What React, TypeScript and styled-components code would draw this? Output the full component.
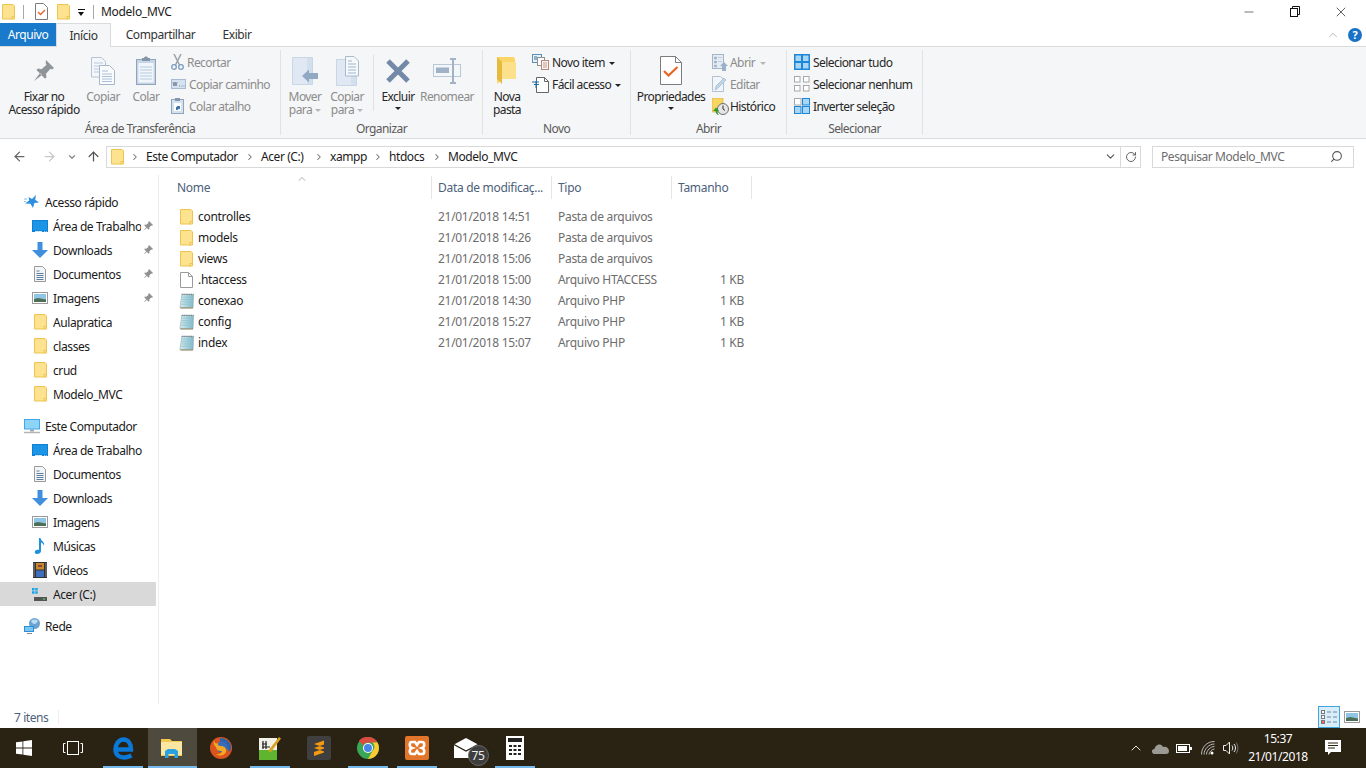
import React from 'react';
import styled, { createGlobalStyle } from 'styled-components';
import { ArrowLeft, ArrowRight, ArrowUp, ChevronDown, ChevronRight, ChevronUp, RotateCw, Search, X, Minus } from 'lucide-react';

const Global = createGlobalStyle`
  html, body { margin: 0; padding: 0; background: #fff; overflow: hidden; }
  * { box-sizing: border-box; }
`;

const Page = styled.div`
  width: 1366px;
  height: 768px;
  display: flex;
  flex-direction: column;
  font-family: "Noto Sans", "Open Sans", sans-serif;
  font-size: 12px;
  letter-spacing: -0.42px;
  color: #1a1a1a;
  background: #fff;
`;

/* ---- title bar ---- */
const TitleBar = styled.div`
  height: 23px;
  display: flex;
  align-items: center;
  padding-left: 2px;
`;
const TitleSep = styled.span`
  width: 1px;
  height: 14px;
  background: #a8a8a8;
  margin: 0 ${p => p.$r}px 0 ${p => p.$l}px;
`;
const QuickGap = styled.span`
  width: 9px;
`;
const TitleText = styled.span`
  color: #1a1a1a;
  letter-spacing: -0.3px;
`;
const WindowControls = styled.div`
  margin-left: auto;
  display: flex;
  padding-right: 2px;
`;
const WindowButton = styled.div`
  width: 46px;
  height: 22px;
  display: flex;
  align-items: center;
  justify-content: center;
`;
const QuickCaret = styled.span`
  width: 7px;
  height: 6px;
  margin-left: 8px;
  border-top: 1px solid #111;
  position: relative;
  &::after {
    content: "";
    position: absolute;
    left: 0;
    top: 2px;
    border: 3.5px solid transparent;
    border-top: 4px solid #111;
    border-bottom: 0;
  }
`;

/* ---- tabs ---- */
const TabRow = styled.div`
  height: 24px;
  display: flex;
  align-items: flex-end;
  border-bottom: 1px solid #dadbdc;
`;
const FileTab = styled.div`
  width: 56px;
  height: 23px;
  background: #1979ca;
  color: #fff;
  display: flex;
  align-items: center;
  justify-content: center;
`;
const Tab = styled.div`
  width: ${p => p.$w}px;
  height: 24px;
  margin-bottom: ${p => (p.$active ? '-1px' : '0')};
  background: ${p => (p.$active ? '#f5f6f7' : 'transparent')};
  border: 1px solid ${p => (p.$active ? '#dadbdc' : 'transparent')};
  border-bottom: 0;
  display: flex;
  align-items: center;
  justify-content: center;
  color: #333;
`;
const RibbonHelp = styled.div`
  margin-left: auto;
  display: flex;
  align-items: center;
  gap: 8px;
  height: 23px;
  padding-right: 4px;
`;
const HelpBadge = styled.span`
  width: 14px;
  height: 14px;
  border-radius: 50%;
  background: #1a72c4;
  color: #fff;
  font-size: 11px;
  font-weight: 700;
  line-height: 14px;
  text-align: center;
  letter-spacing: 0;
`;

/* ---- ribbon ---- */
const Ribbon = styled.div`
  height: 92px;
  display: flex;
  background: #f5f6f7;
  border-bottom: 1px solid #dadbdc;
  letter-spacing: -0.57px;
`;
const Group = styled.div`
  width: ${p => p.$w}px;
  display: flex;
  flex-direction: column;
  position: relative;
  &::after {
    content: "";
    position: absolute;
    right: 0;
    top: 3px;
    bottom: 3px;
    width: 1px;
    background: #e1e2e3;
  }
`;
const GroupBody = styled.div`
  height: 72px;
  padding: 4px 0 0 ${p => p.$pad || 0}px;
  display: flex;
`;
const GroupLabel = styled.div`
  height: 19px;
  line-height: 20px;
  text-align: center;
  color: #5a5a5a;
  padding-right: 1px;
`;
const LargeButton = styled.div`
  width: ${p => p.$w}px;
  display: flex;
  flex-direction: column;
  align-items: center;
  color: ${p => (p.$off ? '#8c8c8c' : '#262626')};
`;
const LargeIcon = styled.div`
  height: 39px;
  display: flex;
  align-items: center;
  justify-content: center;
`;
const ButtonText = styled.div`
  line-height: 13px;
  text-align: center;
  white-space: nowrap;
  display: flex;
  flex-direction: column;
  align-items: center;
`;
const InlineCaret = styled.span`
  display: inline-block;
  vertical-align: middle;
  margin-left: ${p => p.$gap ?? 3}px;
  border: 3px solid transparent;
  border-top: 3px solid ${p => (p.$off ? '#b5b5b5' : '#222')};
  border-bottom: 0;
`;
const BelowCaret = styled.span`
  display: block;
  margin-top: 4px;
  border: 3px solid transparent;
  border-top: 3px solid #222;
  border-bottom: 0;
`;
const RibbonSep = styled.div`
  width: 1px;
  height: 56px;
  margin: 4px 0 0 ${p => p.$l}px;
  background: #dfe0e1;
`;
const SmallColumn = styled.div`
  display: flex;
  flex-direction: column;
  padding-left: ${p => p.$pad || 0}px;
`;
const SmallButton = styled.div`
  height: 22px;
  display: flex;
  align-items: center;
  gap: ${p => p.$gap ?? 3}px;
  white-space: nowrap;
  color: ${p => (p.$off ? '#8c8c8c' : '#262626')};
`;

/* ---- address row ---- */
const AddressRow = styled.div`
  height: 34px;
  display: flex;
  align-items: center;
  background: #fff;
  padding: 1px 12px 0 0;
`;
const NavArrow = styled.div`
  width: ${p => p.$w}px;
  display: flex;
  justify-content: center;
`;
const AddressBox = styled.div`
  width: 1035px;
  height: 22px;
  margin-left: 3px;
  border: 1px solid #d9d9d9;
  display: flex;
  align-items: center;
  padding-left: 4px;
`;
const CrumbArrow = styled.span`
  width: 22px;
  display: flex;
  justify-content: center;
  color: #6b6b6b;
`;
const Crumb = styled.span`
  width: ${p => p.$w}px;
  white-space: nowrap;
  color: #1a1a1a;
`;
const AddressEnd = styled.div`
  margin-left: auto;
  height: 20px;
  display: flex;
  align-items: center;
`;
const AddressEndButton = styled.div`
  width: ${p => p.$w}px;
  height: 20px;
  display: flex;
  align-items: center;
  justify-content: center;
  color: #555;
  border-left: ${p => (p.$line ? '1px solid #d9d9d9' : '0')};
`;
const SearchBox = styled.div`
  width: 202px;
  height: 22px;
  margin-left: auto;
  border: 1px solid #d9d9d9;
  display: flex;
  align-items: center;
  justify-content: space-between;
  padding: 0 10px 0 8px;
  color: #6d6d6d;
`;
const SearchGlyph = styled(Search)`
  transform: scaleX(-1);
`;

/* ---- main area ---- */
const Main = styled.div`
  flex: 1;
  min-height: 0;
  display: flex;
`;
const NavPane = styled.nav`
  width: 159px;
  padding-top: 17px;
  position: relative;
  &::after {
    content: "";
    position: absolute;
    right: 0;
    top: 2px;
    bottom: 2px;
    width: 1px;
    background: #ececec;
  }
`;
const NavSection = styled.div`
  margin-bottom: 8px;
`;
const NavRow = styled.div`
  width: 156px;
  height: 24px;
  display: flex;
  align-items: center;
  gap: 5px;
  padding-left: ${p => (p.$top ? 24 : 32)}px;
  padding-right: 3px;
  background: ${p => (p.$selected ? '#d9d9d9' : 'transparent')};
  color: #1a1a1a;
`;
const NavLabel = styled.span`
  flex: 1;
  min-width: 0;
  overflow: hidden;
  white-space: nowrap;
`;
const NavIconSlot = styled.span`
  width: 16px;
  display: flex;
  justify-content: center;
`;
const PinSlot = styled.span`
  display: flex;
  margin-left: -3px;
`;
const Content = styled.div`
  flex: 1;
  padding-top: 3px;
  letter-spacing: -0.3px;
`;
const HeaderRow = styled.div`
  display: flex;
  height: 23px;
  margin-bottom: 7px;
  position: relative;
`;
const HeaderCell = styled.div`
  width: ${p => p.$w}px;
  padding-left: ${p => p.$pad}px;
  border-right: 1px solid #e5e5e5;
  display: flex;
  align-items: center;
  color: #4c607a;
  white-space: nowrap;
  overflow: hidden;
`;
const SortArrow = styled.span`
  position: absolute;
  left: 137px;
  top: -3px;
  color: #777;
  display: flex;
`;
const FileRow = styled.div`
  display: flex;
  height: 21px;
  align-items: center;
`;
const NameCell = styled.div`
  width: 273px;
  padding-left: 20px;
  display: flex;
  align-items: center;
  gap: 4px;
  color: #1a1a1a;
`;
const IconSlot = styled.span`
  width: 15px;
  display: flex;
  justify-content: center;
`;
const MetaCell = styled.div`
  width: ${p => p.$w}px;
  padding-left: ${p => (p.$right ? 0 : 6)}px;
  text-align: ${p => (p.$right ? 'right' : 'left')};
  color: #6d6d6d;
  white-space: nowrap;
`;

/* ---- status bar ---- */
const StatusBar = styled.div`
  height: 22px;
  display: flex;
  align-items: center;
  padding-left: 14px;
  color: #4c607a;
`;
const StatusSep = styled.span`
  width: 1px;
  height: 14px;
  background: #eee;
  margin-left: 10px;
`;
const ViewButtons = styled.div`
  margin-left: auto;
  display: flex;
  align-items: center;
  padding-right: 6px;
  gap: 4px;
`;
const ViewButton = styled.div`
  width: 22px;
  height: 22px;
  display: flex;
  align-items: center;
  justify-content: center;
  background: ${p => (p.$active ? '#d8ecf9' : 'transparent')};
  border: 1px solid ${p => (p.$active ? '#3fa5dc' : 'transparent')};
`;

/* ---- taskbar ---- */
const Taskbar = styled.div`
  height: 40px;
  background: #2a2213;
  display: flex;
  align-items: stretch;
  color: #fff;
`;
const TaskItem = styled.div`
  width: ${p => p.$w || 49}px;
  display: flex;
  align-items: center;
  justify-content: center;
  position: relative;
  background: ${p => (p.$active ? '#4f4a3e' : 'transparent')};
  ${p => p.$open && `
    &::after {
      content: "";
      position: absolute;
      left: ${p.$active ? 0 : 4.5}px;
      right: ${p.$active ? 0 : 4.5}px;
      bottom: 0;
      height: 2px;
      background: #76b9ed;
    }
  `}
`;
const MailBadge = styled.span`
  position: absolute;
  left: 26px;
  top: 17px;
  width: 21px;
  height: 21px;
  border-radius: 50%;
  background: #3d3d3d;
  border: 1px solid #6a6a6a;
  color: #eee;
  font-size: 12px;
  line-height: 19px;
  text-align: center;
  letter-spacing: -0.3px;
`;
const Tray = styled.div`
  margin-left: auto;
  display: flex;
  align-items: center;
  padding-right: 14px;
`;
const TrayIcon = styled.div`
  width: ${p => p.$w || 24}px;
  display: flex;
  justify-content: center;
`;
const Clock = styled.div`
  width: 72px;
  text-align: center;
  line-height: 18px;
  color: #fff;
`;

/* ---- icons ---- */
const FolderFile = () => (
  <svg width="13" height="16" viewBox="0 0 13 16">
    <path d="M.5.5h10.5l1.5 1.5v13H.5z" fill="#fde28f" stroke="#ecc44f" />
    <path d="M10 15.5v-3h2.500" fill="none" stroke="#ecc44f" />
  </svg>
);
const PlainFile = () => (
  <svg width="13" height="16" viewBox="0 0 13 16">
    <path d="M.5.5h8l4 4v11H.5z" fill="#fff" stroke="#9a9a9a" />
    <path d="M8.500.5v4h4" fill="none" stroke="#9a9a9a" />
  </svg>
);
const PhpFile = () => (
  <svg width="16" height="16" viewBox="0 0 16 16">
    <defs>
      <linearGradient id="phpFill" x1="0" y1="0" x2="1" y2="0">
        <stop offset="0" stopColor="#d5ecf1" />
        <stop offset="1" stopColor="#7fb8c9" />
      </linearGradient>
    </defs>
    <path d="M3 1h12.500l-.5 14H1z" fill="url(#phpFill)" stroke="#8aa5ab" strokeWidth=".6" />
    <path d="M3.500 4h11M3 6.500h11.500M3 9h11.500M2.500 11.500h12" stroke="#8fc3ce" strokeWidth=".8" />
    <path d="M3 .8h12.500" stroke="#555" strokeWidth="1.200" strokeDasharray="1 1" />
    <path d="M1.500 15.500H15" stroke="#8a7a50" />
  </svg>
);
const Pin = () => (
  <svg width="10" height="10" viewBox="0 0 10 10">
    <path d="M6 0l4 4-1 .8-.7-.3L6.200 6.600l.3 1.400-.8.8L1.200 4.300l.8-.8 1.400.3L5.500 1.700l-.3-.7zM3 6.300L.5 9.500 3.700 7z" fill="#909090" />
  </svg>
);
const StarIcon = () => (
  <svg width="16" height="16" viewBox="0 0 16 16">
    <path d="M12 1l-.8 4.800 3.800 2.600-4.600.6L9 14 6.400 9.800 1 9.500l4.200-3L4.600 3l3.400 2z" fill="#2f8fdf" />
    <path d="M0 5h3M0 7.500h2" stroke="#7fc0ee" />
  </svg>
);
const DesktopIcon = () => (
  <svg width="16" height="14" viewBox="0 0 16 14">
    <rect x="0" y="1" width="16" height="12" fill="#0f7fd3" />
    <rect x="1" y="2" width="14" height="9.500" fill="#1c95e6" />
    <path d="M3 12.500h7M12 12.500h.800M13.800 12.500h.800" stroke="#fff" strokeWidth=".8" />
  </svg>
);
const DownloadIcon = () => (
  <svg width="16" height="16" viewBox="0 0 16 16">
    <path d="M5.500 0h5v8H16l-8 8-8-8h5.500z" fill="#3f8fdc" />
  </svg>
);
const DocIcon = () => (
  <svg width="14" height="16" viewBox="0 0 14 16">
    <path d="M1.500.5h8l3 3v12h-11z" fill="#f3f5f7" stroke="#9a9a9a" />
    <path d="M3.500 5h3M3.500 7.500h7M3.500 9.500h7M3.500 11.500h7M3.500 13.500h7" stroke="#5b7da0" />
  </svg>
);
const PicturesIcon = () => (
  <svg width="16" height="12" viewBox="0 0 16 12">
    <rect x=".5" y=".5" width="15" height="11" fill="#fff" stroke="#9a9a9a" />
    <rect x="2" y="2" width="12" height="8" fill="#8fc6e8" />
    <path d="M2 7l4-1 8 1.500V10H2z" fill="#4d6f58" />
  </svg>
);
const MusicIcon = () => (
  <svg width="12" height="16" viewBox="0 0 12 16">
    <path d="M5 0h1.500c.4 3 4.500 3.500 3.500 8-.5-2-2-3.200-3-3.400V13c0 2-2 3-4 3-2 0-2.800-1.500-2-2.700C1.800 11.800 4 11.500 5 12z" fill="#1e90dd" />
  </svg>
);
const VideoIcon = () => (
  <svg width="14" height="16" viewBox="0 0 14 16">
    <rect width="14" height="16" fill="#333" />
    <rect x="3" y="1" width="8" height="6.500" fill="#c8892d" />
    <rect x="3" y="8.500" width="8" height="6.500" fill="#3e6fbe" />
    <path d="M5 3h4v2H5z" fill="#8c3f3f" />
    <path d="M1 1.500v13M13 1.500v13" stroke="#ddd" strokeWidth="1" strokeDasharray="1 1" />
  </svg>
);
const DriveIcon = () => (
  <svg width="16" height="16" viewBox="0 0 16 16">
    <path d="M0 2h2.500v2.500H0zM3.200 2h2.500v2.500H3.200zM0 5.200h2.500v2.500H0zM3.200 5.200h2.500v2.500H3.200z" fill="#18a4e8" />
    <path d="M2 10l3-2h8l2 2v1H2z" fill="#d9d9d9" />
    <rect x="2" y="11" width="13" height="4" fill="#555" />
    <rect x="11" y="12.500" width="2" height="1.200" fill="#4cd964" />
  </svg>
);
const ComputerIcon = () => (
  <svg width="16" height="15" viewBox="0 0 16 15">
    <rect x="0" y="0" width="16" height="10.500" fill="#3ea8ea" />
    <rect x="1" y="1" width="14" height="8.500" fill="#8ed4f8" />
    <path d="M6 10.500h4v2H6z" fill="#9aa3ab" />
    <path d="M0 13.500h16" stroke="#aeb6bc" strokeWidth="1.500" />
  </svg>
);
const NetworkIcon = () => (
  <svg width="16" height="16" viewBox="0 0 16 16">
    <circle cx="10.500" cy="5.500" r="5.500" fill="#6aa3cf" />
    <path d="M7 3c2-2 5-2 7 0-1 1-2 3-3.500 3S8 5 7 3z" fill="#bcdcf2" />
    <rect x="0" y="8" width="10" height="6" fill="#2a8fdc" />
    <rect x="1" y="9" width="8" height="4" fill="#7cc7f2" />
    <path d="M3 15.500h5" stroke="#888" />
  </svg>
);
const PinLarge = () => (
  <svg width="22" height="24" viewBox="0 0 22 24">
    <path d="M13 1l8 8-2 1.500-1.500-.8-4.500 5 .5 3.500-1.500 1.500L3.500 11l1.500-1.500 3.500.8 5-4.500-.8-1.500zM7 14l-6 8 8-6z" fill="#8f9498" />
  </svg>
);
const CopyLarge = () => (
  <svg width="24" height="28" viewBox="0 0 24 28">
    <path d="M.5.500h10l4 4V20H.500z" fill="#f3f6fa" stroke="#b6c3d2" />
    <path d="M3 6h9M3 9h9M3 12h9M3 15h9" stroke="#b9cce0" />
    <path d="M8.500 8.500h10l5 5v14h-15z" fill="#f8fafc" stroke="#a8b7c8" />
    <path d="M11 14h6M11 17h10M11 19.500h10M11 22h10M11 24.500h10" stroke="#a9c0d8" />
  </svg>
);
const PasteLarge = () => (
  <svg width="20" height="29" viewBox="0 0 20 29">
    <rect x=".5" y="3.500" width="19" height="25" fill="#c7d6e6" stroke="#8fa4ba" />
    <rect x="2.500" y="7" width="15" height="19.500" fill="#f2f6fb" />
    <path d="M4 11h12M4 14h12M4 17h12M4 20h12M4 23h12" stroke="#b3c9df" />
    <path d="M6 5V2h2c0-2 4-2 4 0h2v3z" fill="#8696a8" />
  </svg>
);
const Scissors = () => (
  <svg width="13" height="16" viewBox="0 0 13 16">
    <path d="M3 0l5.500 11M10 0L4.500 11" stroke="#9aa2aa" strokeWidth="1.500" fill="none" />
    <circle cx="3" cy="13" r="2.300" fill="none" stroke="#7a9cc0" strokeWidth="1.300" />
    <circle cx="10" cy="13" r="2.300" fill="none" stroke="#7a9cc0" strokeWidth="1.300" />
  </svg>
);
const PathIcon = () => (
  <svg width="15" height="10" viewBox="0 0 15 10">
    <rect x=".5" y=".5" width="14" height="9" fill="#d5e2f0" stroke="#a8bbd0" />
    <path d="M2 3l1 4 1-4 1 4 1-4M8 7h1M10.500 7h1M12.500 7h1" stroke="#66788c" strokeWidth=".8" fill="none" />
  </svg>
);
const PasteShortcut = () => (
  <svg width="13" height="16" viewBox="0 0 13 16">
    <rect x=".5" y="1.500" width="12" height="14" fill="#d4e1ee" stroke="#8ea5bc" />
    <rect x="3" y="5" width="7" height="8" fill="#fff" />
    <path d="M4 0h5v3H4z" fill="#8696a8" />
    <path d="M5 12V9h1.500L5.500 8H9v3.500L8 10.500 6.500 12z" fill="#3f74a8" />
  </svg>
);
const MoveLarge = () => (
  <svg width="26" height="28" viewBox="0 0 26 28">
    <path d="M.5.500h20v27H.500z" fill="#dfe8f3" stroke="#c8d6e6" />
    <path d="M15 1h5v26h-5z" fill="#d2dfed" />
    <path d="M10 19l7-6.500V16h9v6h-9v3.500z" fill="#92a9c4" />
  </svg>
);
const CopyToLarge = () => (
  <svg width="23" height="30" viewBox="0 0 23 30">
    <path d="M.5 3.500h20v26H.500z" fill="#dfe8f3" stroke="#c8d6e6" />
    <path d="M15 4h5v25h-5z" fill="#d2dfed" />
    <path d="M9.500.5h8.500l4.500 4.500v15H9.500z" fill="#f6f9fc" stroke="#a8b9cc" />
    <path d="M12 5h4M12 8h8M12 11h8M12 14h8M12 17h8" stroke="#9fb6ce" />
  </svg>
);
const DeleteLarge = () => (
  <svg width="26" height="26" viewBox="0 0 26 26">
    <path d="M3 3l20 20M23 3L3 23" stroke="#7389a8" strokeWidth="5" />
  </svg>
);
const RenameLarge = () => (
  <svg width="28" height="26" viewBox="0 0 28 26">
    <rect x=".5" y="6.500" width="27" height="12" fill="#f4f7fa" stroke="#b9c7d6" />
    <rect x="3" y="9.500" width="13" height="5.500" fill="#a0b2c8" />
    <path d="M17 1h6M20 1v24M17 25h6" stroke="#a2b3c6" strokeWidth="2" />
  </svg>
);
const NewFolderLarge = () => (
  <svg width="20" height="27" viewBox="0 0 20 27">
    <path d="M0 0h17l1 2v20H5L0 27z" fill="#fbd567" />
    <path d="M0 0l5 5v22L0 22z" fill="#e7b93f" />
    <path d="M5 5h14v17H5z" fill="#fde08c" />
  </svg>
);
const NewItem = () => (
  <svg width="17" height="16" viewBox="0 0 17 16">
    <rect x=".5" y=".5" width="9" height="8" fill="#e8f2fa" stroke="#5b8fb8" />
    <path d="M2 3h3M2 5h3" stroke="#3f6f96" />
    <rect x="5.500" y="3.500" width="7" height="8" fill="#fff" stroke="#909090" />
    <rect x="9.500" y="6.500" width="7" height="9" fill="#fdf3ee" stroke="#b08a80" />
    <path d="M11 9h4M11 11h4M11 13h4" stroke="#c79a8a" />
  </svg>
);
const EasyAccess = () => (
  <svg width="17" height="17" viewBox="0 0 17 17">
    <path d="M4.500 1.500h8l4 4v11h-12z" fill="#fff" stroke="#666" />
    <path d="M12.500 1.500v4h4" fill="none" stroke="#666" />
    <path d="M0 6h7M2 8.500h5M0 6v0M4 5v7" stroke="#1f6fa8" strokeWidth="1" />
  </svg>
);
const PropsLarge = () => (
  <svg width="22" height="29" viewBox="0 0 22 29">
    <path d="M.5.500h15l6 6v22H.500z" fill="#fff" stroke="#7c7c7c" />
    <path d="M15.500.5v6h6" fill="none" stroke="#7c7c7c" />
    <path d="M4 15l4.500 4.500 9-8.500" fill="none" stroke="#ea6420" strokeWidth="2.200" />
  </svg>
);
const OpenSmall = () => (
  <svg width="16" height="17" viewBox="0 0 16 17">
    <rect x=".5" y=".5" width="11" height="14" fill="#e4ebf3" stroke="#a5b5c6" />
    <path d="M2.500 3h2v2h-2zM2.500 7h2v2h-2zM6 3.500h4M6 7.500h4M2.500 11h2v2h-2z" fill="#9cb1c7" stroke="#9cb1c7" strokeWidth=".5" />
    <path d="M12 8l4 4h-2v5h-4v-5H8z" fill="#9cb1c7" />
  </svg>
);
const EditSmall = () => (
  <svg width="15" height="16" viewBox="0 0 15 16">
    <path d="M.5.500h8l3 3v12H.500z" fill="#f2f6fa" stroke="#b2c1d1" />
    <path d="M3 14l1-4 8-8 2 2-8 8z" fill="#c2d6ea" stroke="#9fb6cd" strokeWidth=".7" />
  </svg>
);
const HistorySmall = () => (
  <svg width="17" height="17" viewBox="0 0 17 17">
    <path d="M0 0h11v14H0z" fill="#f7d55e" stroke="#d7ae3c" strokeWidth=".6" />
    <circle cx="11" cy="11" r="5.500" fill="#e5e5e5" stroke="#6e6e6e" />
    <path d="M11 7.500V11l2 1.500" stroke="#333" fill="none" />
    <path d="M1 13l3-3.500 3 3.500H5.500c0 2 .5 3 1.500 4-2 0-3.500-2-3.500-4z" fill="#2b9b30" />
  </svg>
);
const SelectAll = () => (
  <svg width="16" height="16" viewBox="0 0 16 16">
    <rect width="16" height="16" fill="#1e86d6" />
    <path d="M1.500 1.500h5.500v5.500H1.500zM9 1.500h5.500v5.500H9zM1.500 9h5.500v5.500H1.500zM9 9h5.500v5.500H9z" fill="#a9d6f6" />
  </svg>
);
const SelectNone = () => (
  <svg width="16" height="16" viewBox="0 0 16 16" fill="#fff" stroke="#a8a8a8">
    <rect x=".5" y=".5" width="5.500" height="5.500" />
    <rect x="9.500" y=".5" width="5.500" height="5.500" />
    <rect x=".5" y="9.500" width="5.500" height="5.500" />
    <rect x="9.500" y="9.500" width="5.500" height="5.500" />
  </svg>
);
const SelectInvert = () => (
  <svg width="16" height="16" viewBox="0 0 16 16">
    <rect x=".5" y=".5" width="6.500" height="6.500" fill="#fff" stroke="#a8a8a8" />
    <rect x="8.500" y=".5" width="7" height="6.500" fill="#a9d6f6" stroke="#1e86d6" />
    <rect x=".5" y="8.500" width="6.500" height="7" fill="#a9d6f6" stroke="#1e86d6" />
    <rect x="8.500" y="8.500" width="7" height="7" fill="#a9d6f6" stroke="#1e86d6" />
  </svg>
);
const CheckDoc = () => (
  <svg width="13" height="17" viewBox="0 0 13 17">
    <path d="M.5.500h8l4 4v12H.500z" fill="#fff" stroke="#7c7c7c" />
    <path d="M3 9l2.500 2.500L10 7" fill="none" stroke="#e8602a" strokeWidth="1.400" />
  </svg>
);
const RestoreIcon = () => (
  <svg width="10" height="11" viewBox="0 0 10 11" fill="none" stroke="#111">
    <rect x=".5" y="2.500" width="7" height="8" />
    <path d="M2.500 2.500v-2h7v8h-2" />
  </svg>
);

const StartIcon = () => (
  <svg width="16" height="16" viewBox="0 0 16 16">
    <path d="M0 2.300l6.500-.9v6.200H0zM7.300 1.300L16 0v7.600H7.300zM0 8.400h6.500v6.200L0 13.700zM7.300 8.400H16V16l-8.700-1.300z" fill="#fff" />
  </svg>
);
const TaskViewIcon = () => (
  <svg width="20" height="14" viewBox="0 0 20 14" fill="none" stroke="#fff">
    <rect x="4.500" y=".5" width="11" height="13" />
    <path d="M2.500 2.500h-2v9h2M17.500 2.500h2v9h-2" />
  </svg>
);
const EdgeIcon = () => (
  <svg width="21" height="23" viewBox="0 0 21 23">
    <path d="M4 12.500h14c0-6-3-10-7.500-10C6 2.500 2.500 7 2.500 12.500c0 5.500 4 8 8.500 8 3 0 5-.8 7.500-2" fill="none" stroke="#0a78d6" strokeWidth="4.500" />
  </svg>
);
const ExplorerIcon = () => (
  <svg width="22" height="19" viewBox="0 0 22 19">
    <path d="M0 0h9l2 2h10v15H0z" fill="#f3c94f" />
    <rect x="0" y="3" width="21" height="13" fill="#fbe6a2" />
    <path d="M4 12l3-2h7l3 2v7h-3.500v-4h-6v4H4z" fill="#2aa2e2" />
  </svg>
);
const FirefoxIcon = () => (
  <svg width="22" height="22" viewBox="0 0 22 22">
    <circle cx="11" cy="11" r="11" fill="#d9541e" />
    <path d="M10 1a10.500 10.500 0 0 1 11 8c.5 3-1 5-2 6-1-5-5-7-9-7z" fill="#2f62ad" />
    <circle cx="12" cy="10" r="5.500" fill="#3a6db8" />
    <path d="M4 3c0 3 2 4 4 3-1 2 1 3 3 3 3 0 6 2 5 6-1 3-6 5-10 2 3 .5 6-.5 6-3-3 .5-6-1-6-4C4 9 3 6 4 3z" fill="#f7a823" />
  </svg>
);
const NotepadIcon = () => (
  <svg width="22" height="24" viewBox="0 0 22 24">
    <rect x="0" y="2" width="18" height="22" fill="#f0f2e8" />
    <rect x="0" y="14" width="18" height="10" fill="#5fb52f" />
    <path d="M3 8h5M3 11h8" stroke="#222" />
    <path d="M4 5v8M7 5v8" stroke="#222" strokeWidth="1.200" />
    <path d="M9 15L20 1l2 1.500L12 16z" fill="#d9a21e" />
  </svg>
);
const SublimeIcon = () => (
  <svg width="24" height="24" viewBox="0 0 24 24">
    <rect width="24" height="24" rx="2" fill="#3f3f3f" />
    <path d="M7 8l10-3.500v4L7 12zM7 12l10 3.500v-4L7 8zM7 16l10-3.500v4L7 20z" fill="#f59a10" />
  </svg>
);
const ChromeIcon = () => (
  <svg width="22" height="22" viewBox="0 0 22 22">
    <circle cx="11" cy="11" r="11" fill="#3aa757" />
    <path d="M11 0a11 11 0 0 1 9.500 5.500H11a5.500 5.500 0 0 0-5 3L2 3.500A11 11 0 0 1 11 0z" fill="#dd4b3e" />
    <path d="M20.500 5.500A11 11 0 0 1 11 22l4.500-8a5.500 5.500 0 0 0 0-8.500z" fill="#fbcb2f" />
    <circle cx="11" cy="11" r="5" fill="#fff" />
    <circle cx="11" cy="11" r="4" fill="#4a86e8" />
  </svg>
);
const XamppIcon = () => (
  <svg width="24" height="24" viewBox="0 0 24 24">
    <rect width="24" height="24" rx="2" fill="#e2752a" />
    <path d="M7 6h3l2 3 2-3h3c3 0 3 5 0 6 3 1 3 6 0 6h-3l-2-3-2 3H7c-3 0-3-5 0-6-3-1-3-6 0-6z" fill="none" stroke="#fff" strokeWidth="2.600" />
  </svg>
);
const MailIcon = () => (
  <svg width="24" height="20" viewBox="0 0 24 20">
    <path d="M0 6.500L12 0l12 6.500V20H0z" fill="#fff" />
    <path d="M0 6.500l12 6.500 12-6.500" fill="none" stroke="#2a2213" strokeWidth="1.200" />
  </svg>
);
const CalcIcon = () => (
  <svg width="18" height="24" viewBox="0 0 18 24">
    <rect width="18" height="24" fill="#fff" />
    <rect x="2" y="2" width="14" height="4" fill="#222" />
    <path d="M3 9h3v2H3zM7.500 9h3v2h-3zM12 9h3v2h-3zM3 13h3v2H3zM7.500 13h3v2h-3zM12 13h3v2h-3zM3 17h3v2H3zM7.500 17h3v2h-3zM12 17h3v2h-3z" fill="#222" />
  </svg>
);
const CloudIcon = () => (
  <svg width="17" height="11" viewBox="0 0 17 11">
    <path d="M3 11c-4 0-4-5-.5-5C3 2 9-1 11 4c3-1 6 1 6 4 0 2-1 3-3 3z" fill="#9c9a94" />
  </svg>
);
const BatteryIcon = () => (
  <svg width="16" height="9" viewBox="0 0 16 9">
    <rect x=".5" y=".5" width="13" height="8" fill="none" stroke="#fff" />
    <rect x="2" y="2" width="9" height="5" fill="#fff" />
    <rect x="14" y="3" width="2" height="3" fill="#fff" />
  </svg>
);
const WifiIcon = () => (
  <svg width="14" height="14" viewBox="0 0 14 14" fill="none" stroke="#bbb">
    <path d="M.5 13.500C.5 6 6 .5 13.500.5" />
    <path d="M3 13.500C3 8 8 3 13.500 3" />
    <path d="M5.500 13.500C5.500 9.500 9.500 5.500 13.500 5.500" />
    <path d="M8 13.500C8 11 11 8 13.500 8" />
    <circle cx="11" cy="12" r="1.500" fill="#fff" stroke="none" />
  </svg>
);
const VolumeIcon = () => (
  <svg width="16" height="14" viewBox="0 0 16 14" fill="none" stroke="#eee">
    <path d="M.5 4.500h2.500l3.500-3.500v12L3 9.500H.5z" />
    <path d="M9 4.500c1 1.500 1 3.500 0 5M11 3c2 2 2 6 0 8" />
    <path d="M13 1.500c2.500 3 2.500 8 0 11" stroke="#777" />
  </svg>
);
const NotifyIcon = () => (
  <svg width="16" height="16" viewBox="0 0 16 16">
    <path d="M0 0h16v12H6l-3 3v-3H0z" fill="#fff" />
    <path d="M3 3h10M3 5.500h10M3 8h7" stroke="#2a2213" />
  </svg>
);
const DetailsView = () => (
  <svg width="16" height="15" viewBox="0 0 16 15">
    <rect x=".5" y=".5" width="3" height="3" fill="#fff" stroke="#777" />
    <rect x=".5" y="5.500" width="3" height="3" fill="#fff" stroke="#777" />
    <rect x=".5" y="10.500" width="3" height="3" fill="#f66" stroke="#777" />
    <path d="M6 2h4M12 2h4M6 7h4M12 7h4M6 12h4M12 12h4" stroke="#6b8aa0" />
  </svg>
);

const quickFiles = [
  { name: 'Área de Trabalho', icon: <DesktopIcon />, pinned: true },
  { name: 'Downloads', icon: <DownloadIcon />, pinned: true },
  { name: 'Documentos', icon: <DocIcon />, pinned: true },
  { name: 'Imagens', icon: <PicturesIcon />, pinned: true },
  { name: 'Aulapratica', icon: <FolderFile /> },
  { name: 'classes', icon: <FolderFile /> },
  { name: 'crud', icon: <FolderFile /> },
  { name: 'Modelo_MVC', icon: <FolderFile /> },
];

const pcFiles = [
  { name: 'Área de Trabalho', icon: <DesktopIcon /> },
  { name: 'Documentos', icon: <DocIcon /> },
  { name: 'Downloads', icon: <DownloadIcon /> },
  { name: 'Imagens', icon: <PicturesIcon /> },
  { name: 'Músicas', icon: <MusicIcon /> },
  { name: 'Vídeos', icon: <VideoIcon /> },
  { name: 'Acer (C:)', icon: <DriveIcon />, selected: true },
];

const files = [
  { name: 'controlles', date: '21/01/2018 14:51', type: 'Pasta de arquivos', size: '', icon: <FolderFile /> },
  { name: 'models', date: '21/01/2018 14:26', type: 'Pasta de arquivos', size: '', icon: <FolderFile /> },
  { name: 'views', date: '21/01/2018 15:06', type: 'Pasta de arquivos', size: '', icon: <FolderFile /> },
  { name: '.htaccess', date: '21/01/2018 15:00', type: 'Arquivo HTACCESS', size: '1 KB', icon: <PlainFile /> },
  { name: 'conexao', date: '21/01/2018 14:30', type: 'Arquivo PHP', size: '1 KB', icon: <PhpFile /> },
  { name: 'config', date: '21/01/2018 15:27', type: 'Arquivo PHP', size: '1 KB', icon: <PhpFile /> },
  { name: 'index', date: '21/01/2018 15:07', type: 'Arquivo PHP', size: '1 KB', icon: <PhpFile /> },
];

export default function App() {
  return (
    <Page>
      <Global />
      <TitleBar>
        <FolderFile />
        <TitleSep $l={8} $r={11} />
        <CheckDoc />
        <QuickGap />
        <FolderFile />
        <QuickCaret />
        <TitleSep $l={8} $r={7} />
        <TitleText>Modelo_MVC</TitleText>
        <WindowControls>
          <WindowButton><Minus size={14} strokeWidth={1} color="#111" /></WindowButton>
          <WindowButton><RestoreIcon /></WindowButton>
          <WindowButton><X size={16} strokeWidth={1} color="#111" /></WindowButton>
        </WindowControls>
      </TitleBar>

      <TabRow>
        <FileTab>Arquivo</FileTab>
        <Tab $w={55} $active>Início</Tab>
        <Tab $w={99}>Compartilhar</Tab>
        <Tab $w={54}>Exibir</Tab>
        <RibbonHelp>
          <ChevronUp size={14} strokeWidth={1} color="#888" />
          <HelpBadge>?</HelpBadge>
        </RibbonHelp>
      </TabRow>

      <Ribbon>
        <Group $w={281}>
          <GroupBody $pad={6}>
            <LargeButton $w={76}>
              <LargeIcon><PinLarge /></LargeIcon>
              <ButtonText>Fixar no<br />Acesso rápido</ButtonText>
            </LargeButton>
            <LargeButton $w={42} $off>
              <LargeIcon><CopyLarge /></LargeIcon>
              <ButtonText>Copiar</ButtonText>
            </LargeButton>
            <LargeButton $w={44} $off>
              <LargeIcon><PasteLarge /></LargeIcon>
              <ButtonText>Colar</ButtonText>
            </LargeButton>
            <SmallColumn $pad={3}>
              <SmallButton $off><Scissors /><span>Recortar</span></SmallButton>
              <SmallButton $off><PathIcon /><span>Copiar caminho</span></SmallButton>
              <SmallButton $off $gap={5}><PasteShortcut /><span>Colar atalho</span></SmallButton>
            </SmallColumn>
          </GroupBody>
          <GroupLabel>Área de Transferência</GroupLabel>
        </Group>

        <Group $w={202}>
          <GroupBody $pad={2}>
            <LargeButton $w={44} $off>
              <LargeIcon><MoveLarge /></LargeIcon>
              <ButtonText>Mover<span>para<InlineCaret $off /></span></ButtonText>
            </LargeButton>
            <LargeButton $w={40} $off>
              <LargeIcon><CopyToLarge /></LargeIcon>
              <ButtonText>Copiar<span>para<InlineCaret $off /></span></ButtonText>
            </LargeButton>
            <RibbonSep $l={6} />
            <LargeButton $w={48}>
              <LargeIcon><DeleteLarge /></LargeIcon>
              <ButtonText>Excluir<BelowCaret /></ButtonText>
            </LargeButton>
            <LargeButton $w={50} $off>
              <LargeIcon><RenameLarge /></LargeIcon>
              <ButtonText>Renomear</ButtonText>
            </LargeButton>
          </GroupBody>
          <GroupLabel>Organizar</GroupLabel>
        </Group>

        <Group $w={148}>
          <GroupBody>
            <LargeButton $w={48}>
              <LargeIcon><NewFolderLarge /></LargeIcon>
              <ButtonText>Nova<br />pasta</ButtonText>
            </LargeButton>
            <SmallColumn $pad={1}>
              <SmallButton><NewItem /><span>Novo item<InlineCaret $gap={4} /></span></SmallButton>
              <SmallButton><EasyAccess /><span>Fácil acesso<InlineCaret $gap={4} /></span></SmallButton>
            </SmallColumn>
          </GroupBody>
          <GroupLabel>Novo</GroupLabel>
        </Group>

        <Group $w={156}>
          <GroupBody $pad={2}>
            <LargeButton $w={76}>
              <LargeIcon><PropsLarge /></LargeIcon>
              <ButtonText>Propriedades<BelowCaret /></ButtonText>
            </LargeButton>
            <SmallColumn $pad={3}>
              <SmallButton $off $gap={2}><OpenSmall /><span>Abrir<InlineCaret $gap={5} $off /></span></SmallButton>
              <SmallButton $off $gap={3}><EditSmall /><span>Editar</span></SmallButton>
              <SmallButton $gap={1}><HistorySmall /><span>Histórico</span></SmallButton>
            </SmallColumn>
          </GroupBody>
          <GroupLabel>Abrir</GroupLabel>
        </Group>

        <Group $w={136}>
          <GroupBody>
            <SmallColumn $pad={7}>
              <SmallButton><SelectAll /><span>Selecionar tudo</span></SmallButton>
              <SmallButton><SelectNone /><span>Selecionar nenhum</span></SmallButton>
              <SmallButton><SelectInvert /><span>Inverter seleção</span></SmallButton>
            </SmallColumn>
          </GroupBody>
          <GroupLabel>Selecionar</GroupLabel>
        </Group>
      </Ribbon>

      <AddressRow>
        <NavArrow $w={38}><ArrowLeft size={15} color="#666" /></NavArrow>
        <NavArrow $w={22}><ArrowRight size={15} color="#c8c8c8" /></NavArrow>
        <NavArrow $w={23}><ChevronDown size={10} color="#888" strokeWidth={3} /></NavArrow>
        <NavArrow $w={20}><ArrowUp size={15} color="#555" /></NavArrow>
        <AddressBox>
          <FolderFile />
          <CrumbArrow><ChevronRight size={10} strokeWidth={2.500} /></CrumbArrow>
          <Crumb $w={93}>Este Computador</Crumb>
          <CrumbArrow><ChevronRight size={10} strokeWidth={2.500} /></CrumbArrow>
          <Crumb $w={47}>Acer (C:)</Crumb>
          <CrumbArrow><ChevronRight size={10} strokeWidth={2.500} /></CrumbArrow>
          <Crumb $w={37}>xampp</Crumb>
          <CrumbArrow><ChevronRight size={10} strokeWidth={2.500} /></CrumbArrow>
          <Crumb $w={37}>htdocs</Crumb>
          <CrumbArrow><ChevronRight size={10} strokeWidth={2.500} /></CrumbArrow>
          <Crumb $w={80}>Modelo_MVC</Crumb>
          <AddressEnd>
            <AddressEndButton $w={20}><ChevronDown size={13} strokeWidth={2} /></AddressEndButton>
            <AddressEndButton $w={20} $line><RotateCw size={12} strokeWidth={1.800} /></AddressEndButton>
          </AddressEnd>
        </AddressBox>
        <SearchBox>
          <span>Pesquisar Modelo_MVC</span>
          <SearchGlyph size={13} color="#555" />
        </SearchBox>
      </AddressRow>

      <Main>
        <NavPane>
          <NavSection>
            <NavRow $top><StarIcon /><NavLabel>Acesso rápido</NavLabel></NavRow>
            {quickFiles.map(f => (
              <NavRow key={f.name}>
                <NavIconSlot>{f.icon}</NavIconSlot>
                <NavLabel>{f.name}</NavLabel>
                {f.pinned && <PinSlot><Pin /></PinSlot>}
              </NavRow>
            ))}
          </NavSection>
          <NavSection>
            <NavRow $top><ComputerIcon /><NavLabel>Este Computador</NavLabel></NavRow>
            {pcFiles.map(f => (
              <NavRow key={f.name} $selected={f.selected}>
                <NavIconSlot>{f.icon}</NavIconSlot>
                <NavLabel>{f.name}</NavLabel>
              </NavRow>
            ))}
          </NavSection>
          <NavRow $top><NetworkIcon /><NavLabel>Rede</NavLabel></NavRow>
        </NavPane>

        <Content>
          <HeaderRow>
            <SortArrow><ChevronUp size={12} strokeWidth={1.200} /></SortArrow>
            <HeaderCell $w={273} $pad={18}>Nome</HeaderCell>
            <HeaderCell $w={120} $pad={6}>Data de modificaç...</HeaderCell>
            <HeaderCell $w={120} $pad={6}>Tipo</HeaderCell>
            <HeaderCell $w={80} $pad={6}>Tamanho</HeaderCell>
          </HeaderRow>
          {files.map(f => (
            <FileRow key={f.name}>
              <NameCell>
                <IconSlot>{f.icon}</IconSlot>
                <span>{f.name}</span>
              </NameCell>
              <MetaCell $w={120}>{f.date}</MetaCell>
              <MetaCell $w={120}>{f.type}</MetaCell>
              <MetaCell $w={72} $right>{f.size}</MetaCell>
            </FileRow>
          ))}
        </Content>
      </Main>

      <StatusBar>
        7 itens
        <StatusSep />
        <ViewButtons>
          <ViewButton $active><DetailsView /></ViewButton>
          <PicturesIcon />
        </ViewButtons>
      </StatusBar>

      <Taskbar>
        <TaskItem $w={47}><StartIcon /></TaskItem>
        <TaskItem $w={51.5}><TaskViewIcon /></TaskItem>
        <TaskItem $open><EdgeIcon /></TaskItem>
        <TaskItem $active $open><ExplorerIcon /></TaskItem>
        <TaskItem><FirefoxIcon /></TaskItem>
        <TaskItem $open><NotepadIcon /></TaskItem>
        <TaskItem><SublimeIcon /></TaskItem>
        <TaskItem $open><ChromeIcon /></TaskItem>
        <TaskItem $open><XamppIcon /></TaskItem>
        <TaskItem><MailIcon /><MailBadge>75</MailBadge></TaskItem>
        <TaskItem $open><CalcIcon /></TaskItem>
        <Tray>
          <TrayIcon><ChevronUp size={16} strokeWidth={1.300} color="#fff" /></TrayIcon>
          <TrayIcon><CloudIcon /></TrayIcon>
          <TrayIcon><BatteryIcon /></TrayIcon>
          <TrayIcon><WifiIcon /></TrayIcon>
          <TrayIcon $w={22}><VolumeIcon /></TrayIcon>
          <Clock>15:37<br />21/01/2018</Clock>
          <TrayIcon $w={38}><NotifyIcon /></TrayIcon>
        </Tray>
      </Taskbar>
    </Page>
  );
}
